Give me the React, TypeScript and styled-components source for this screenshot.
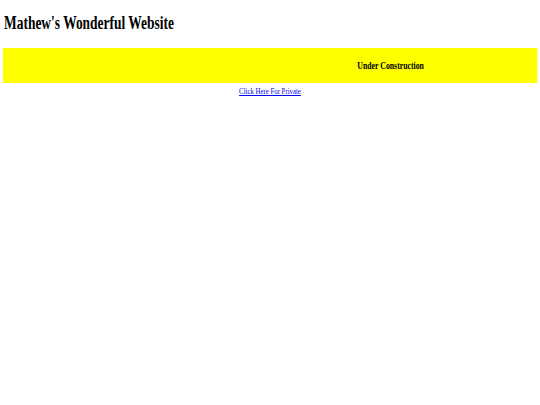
import React from "react";
import styled, { createGlobalStyle } from "styled-components";

const SCALE = 0.74;
const LAYOUT_WIDTH = 540 / SCALE;

const Global = createGlobalStyle`
  html, body {
    margin: 0;
    padding: 0;
    background: #ffffff;
    overflow: hidden;
  }
  body {
    font-family: "Liberation Serif", "Times New Roman", serif;
    color: #000000;
  }
`;

const Page = styled.div`
  width: ${LAYOUT_WIDTH}px;
  transform: scaleX(${SCALE});
  transform-origin: left top;
  display: flex;
  flex-direction: column;
  padding-top: 13px;
  box-sizing: border-box;
`;

const Heading = styled.h1`
  margin: 0 0 0 5.4px;
  font-size: 18.2px;
  line-height: 20px;
  font-weight: bold;
`;

const Banner = styled.div`
  margin: 15px 4px 0 4px;
  height: 35px;
  padding-top: 1.5px;
  box-sizing: border-box;
  background: #ffff00;
  display: grid;
  grid-template-columns: 326px 1fr;
  align-items: center;
`;

const BannerCell = styled.div`
  text-align: center;
  font-size: 10.5px;
  line-height: 12px;
  font-weight: bold;
`;

const LinkRow = styled.div`
  margin-top: 2.7px;
  text-align: center;
  font-size: 9.2px;
  line-height: 11px;
`;

const Link = styled.a`
  color: #0000ee;
  text-decoration: underline;
`;

export default function App() {
  return (
    <>
      <Global />
      <Page>
        <Heading>Mathew's Wonderful Website</Heading>
        <Banner>
          <BannerCell />
          <BannerCell>Under Construction</BannerCell>
        </Banner>
        <LinkRow>
          <Link href="#">Click Here For Private</Link>
        </LinkRow>
      </Page>
    </>
  );
}
